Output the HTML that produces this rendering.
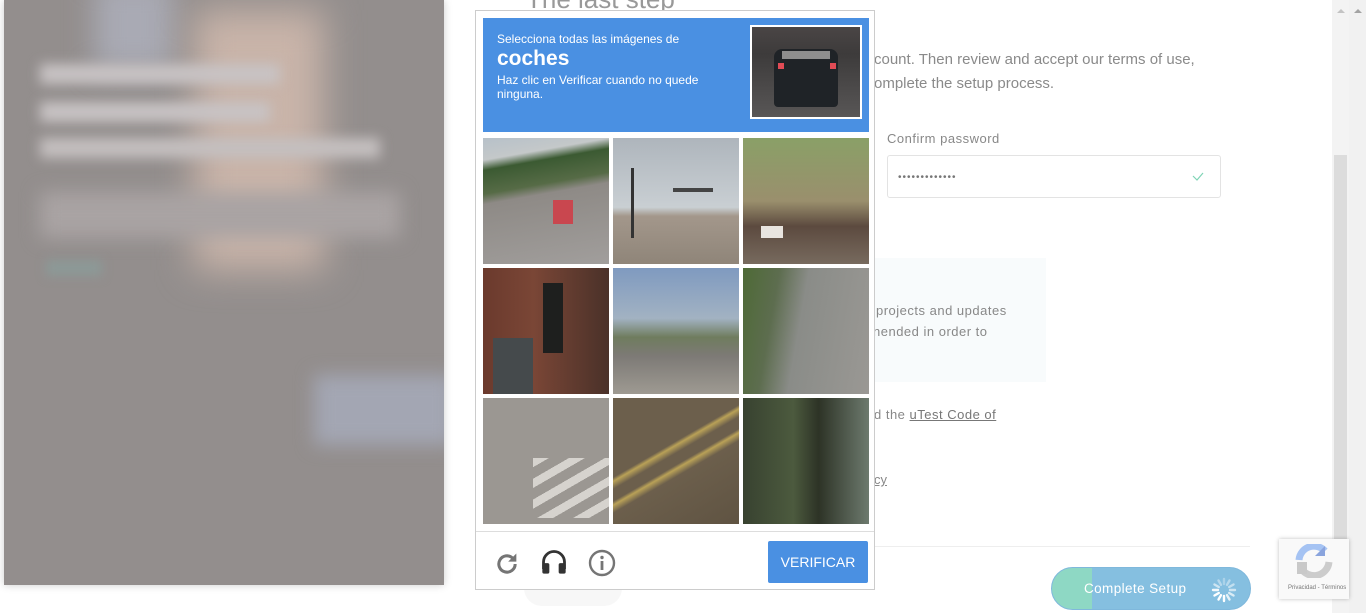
<!DOCTYPE html>
<html><head><meta charset="utf-8"><style>
*{margin:0;padding:0;box-sizing:border-box}
body{width:1366px;height:613px;overflow:hidden;background:#fff;position:relative;font-family:"Liberation Sans",sans-serif}
.abs{position:absolute}
.txt{color:#8a8a8a;font-size:15px}
.tile{position:absolute;width:126px;height:126px}
</style></head><body>
<div class="abs" style="left:4px;top:0;width:440px;height:585px;background:#938e8d;box-shadow:0 0 8px rgba(0,0,0,.2);overflow:hidden">
 <div class="abs" style="left:90px;top:-20px;width:80px;height:90px;background:#a9aab4;filter:blur(14px)"></div>
 <div class="abs" style="left:190px;top:10px;width:130px;height:260px;background:#c9b4a9;filter:blur(18px)"></div>
 <div class="abs" style="left:36px;top:64px;width:240px;height:20px;background:#c8c3c4;filter:blur(6px)"></div>
 <div class="abs" style="left:36px;top:102px;width:230px;height:20px;background:#c8c3c4;filter:blur(6px)"></div>
 <div class="abs" style="left:36px;top:138px;width:340px;height:20px;background:#c4bfbf;filter:blur(6px)"></div>
 <div class="abs" style="left:36px;top:192px;width:360px;height:46px;background:#a9a3a3;filter:blur(9px)"></div>
 <div class="abs" style="left:42px;top:260px;width:56px;height:16px;background:#8c9997;filter:blur(5px)"></div>
 <div class="abs" style="left:310px;top:375px;width:140px;height:70px;background:#a3a6b3;filter:blur(9px)"></div>
</div>
<div class="abs" style="left:526px;top:-16px;font-size:26px;color:#999">The last step</div>
<div class="abs txt" style="left:874px;top:48px;line-height:24px">count. Then review and accept our terms of use,<br>omplete the setup process.</div>
<div class="abs" style="left:887px;top:131px;font-size:13px;color:#888;letter-spacing:.5px">Confirm password</div>
<div class="abs" style="left:887px;top:155px;width:334px;height:43px;border:1px solid #e3e3e3;border-radius:3px">
 <div class="abs" style="left:10px;top:16px;font-size:10px;color:#777;letter-spacing:1px">•••••••••••••</div>
 <svg class="abs" style="left:304px;top:15px" width="12" height="10"><path d="M1 5l4 4 6-7" stroke="#7fd4b6" stroke-width="1.2" fill="none"/></svg>
</div>
<div class="abs" style="left:870px;top:258px;width:176px;height:124px;background:#f8fbfc"></div>
<div class="abs" style="left:876px;top:300px;font-size:13px;color:#888;line-height:21px;letter-spacing:.5px">projects and updates<br><span style="margin-left:-3px">nended in order to</span></div>
<div class="abs" style="left:874px;top:407px;font-size:13px;color:#888;letter-spacing:.5px">d the <u style="color:#777">uTest Code of</u></div>
<div class="abs" style="left:874px;top:472px;font-size:13px;color:#888"><u>cy</u></div>
<div class="abs" style="left:874px;top:546px;width:376px;height:1px;background:#eee"></div>
<div class="abs" style="left:524px;top:570px;width:98px;height:36px;border-radius:18px;background:#f7f7f7"></div>
<div class="abs" style="left:1051px;top:567px;width:200px;height:43px;border-radius:22px;background:#85bfe0;overflow:hidden;border:1px solid #7fb8dc">
 <div class="abs" style="left:0;top:0;width:40px;height:43px;background:#8ed8c4"></div>
 <div class="abs" style="left:32px;top:13px;font-size:13.5px;color:#fff;letter-spacing:.4px">Complete Setup</div>
 <svg class="abs" style="left:157px;top:7px" width="30" height="30" viewBox="-15 -15 30 30"><g stroke="#fff" stroke-width="2.4" stroke-linecap="round">
 <line x1="0" y1="-6" x2="0" y2="-11" opacity=".3" transform="rotate(0)"/><line x1="0" y1="-6" x2="0" y2="-11" opacity=".4" transform="rotate(30)"/><line x1="0" y1="-6" x2="0" y2="-11" opacity=".5" transform="rotate(60)"/><line x1="0" y1="-6" x2="0" y2="-11" opacity=".6" transform="rotate(90)"/><line x1="0" y1="-6" x2="0" y2="-11" opacity=".7" transform="rotate(120)"/><line x1="0" y1="-6" x2="0" y2="-11" opacity=".8" transform="rotate(150)"/><line x1="0" y1="-6" x2="0" y2="-11" transform="rotate(180)"/><line x1="0" y1="-6" x2="0" y2="-11" transform="rotate(210)"/><line x1="0" y1="-6" x2="0" y2="-11" transform="rotate(240)"/><line x1="0" y1="-6" x2="0" y2="-11" opacity=".9" transform="rotate(270)"/><line x1="0" y1="-6" x2="0" y2="-11" opacity=".6" transform="rotate(300)"/><line x1="0" y1="-6" x2="0" y2="-11" opacity=".4" transform="rotate(330)"/></g></svg>
</div>
<div class="abs" style="left:1332px;top:0;width:17px;height:613px;background:#f3f3f3"></div>
<div class="abs" style="left:1334px;top:155px;width:13px;height:400px;background:#dcdcdc"></div>
<div class="abs" style="left:1349px;top:0;width:17px;height:613px;background:#f1f1f1"></div>
<div class="abs" style="left:1354px;top:5px;width:0;height:0;border:4px solid transparent;border-bottom:4px solid #a3a3a3"></div>
<div class="abs" style="left:1337px;top:5px;width:0;height:0;border:4px solid transparent;border-bottom:4px solid #c3c3c3"></div>
<div class="abs" style="left:1279px;top:539px;width:70px;height:60px;background:#f9f9f9;box-shadow:0 0 4px rgba(0,0,0,.25)">
 <svg class="abs" style="left:16px;top:5px" width="38" height="34" viewBox="0 0 38 34"><path d="M4 16a15 15 0 0 1 26-9" stroke="#a5c3f3" stroke-width="7" fill="none"/><path d="M30 2v10h-10z" fill="#8aa4dd"/><path d="M34 18a15 15 0 0 1-28 6" stroke="#ccc" stroke-width="7" fill="none"/><rect x="2" y="18" width="10" height="12" fill="#c9c9c9"/></svg>
 <div class="abs" style="left:9px;top:46px;font-size:6px;color:#777">Privacidad - Términos</div>
</div>
<div class="abs" style="left:475px;top:10px;width:400px;height:580px;background:#fff;border:1px solid #ccc">
 <div class="abs" style="left:7px;top:7px;width:386px;height:114px;background:#4a90e2;color:#fff">
  <div class="abs" style="left:14px;top:14px;font-size:12px">Selecciona todas las imágenes de</div>
  <div class="abs" style="left:14px;top:29px;font-size:21px;font-weight:bold">coches</div>
  <div class="abs" style="left:14px;top:55px;font-size:12px;line-height:14px">Haz clic en Verificar cuando no quede<br>ninguna.</div>
  <div class="abs" style="left:267px;top:7px;width:112px;height:94px;border:2px solid #fff;background:linear-gradient(#4a4545,#3d3b3b 30%,#585656)">
   <div class="abs" style="left:22px;top:22px;width:64px;height:58px;background:#1f2327;border-radius:8px 8px 4px 4px"></div>
   <div class="abs" style="left:30px;top:24px;width:48px;height:8px;background:#8e8e8e"></div>
   <div class="abs" style="left:26px;top:36px;width:6px;height:6px;background:#e04b55"></div>
   <div class="abs" style="left:78px;top:36px;width:6px;height:6px;background:#e04b55"></div>
  </div>
 </div>
 <div class="tile" style="left:7px;top:127px;background:linear-gradient(170deg,#b7c1c9 0%,#c4c8c9 15%,#3b5a32 22%,#566b46 38%,#8e8a86 45%,#a19e9c 100%)"><div class="abs" style="left:70px;top:62px;width:20px;height:24px;background:#c9474f"></div></div>
 <div class="tile" style="left:137px;top:127px;background:linear-gradient(#aeb5bc 0%,#c9cfd3 55%,#a3978b 62%,#8f8579 100%)"><div class="abs" style="left:18px;top:30px;width:3px;height:70px;background:#333"></div><div class="abs" style="left:60px;top:50px;width:40px;height:4px;background:#444"></div></div>
 <div class="tile" style="left:267px;top:127px;background:linear-gradient(#8aa067,#9a8f6d 50%,#5c4a3f 70%,#776a5e)"><div class="abs" style="left:18px;top:88px;width:22px;height:12px;background:#e8e4df"></div></div>
 <div class="tile" style="left:7px;top:257px;background:linear-gradient(90deg,#6b3a2d,#7a4636 40%,#4a3129 100%)"><div class="abs" style="left:60px;top:15px;width:20px;height:70px;background:#1e1f1e"></div><div class="abs" style="left:10px;top:70px;width:40px;height:56px;background:#454a4c"></div></div>
 <div class="tile" style="left:137px;top:257px;background:linear-gradient(#7f9ac0 0%,#a2b2c2 40%,#6f7c5e 55%,#7d7a76 70%,#9e9a92 100%)"></div>
 <div class="tile" style="left:267px;top:257px;background:linear-gradient(100deg,#4e6a36 0%,#5d6d4f 25%,#8a8c88 45%,#9a9894 100%)"></div>
 <div class="tile" style="left:7px;top:387px;background:#9b9792"><div class="abs" style="left:50px;top:60px;width:76px;height:60px;background:repeating-linear-gradient(150deg,#d6d3ce 0 8px,#9b9792 8px 18px)"></div></div>
 <div class="tile" style="left:137px;top:387px;background:linear-gradient(150deg,#6c5f4c 0%,#6c5f4c 40%,#b9a157 42%,#6c5f4c 46%,#6c5f4c 52%,#b9a157 54%,#6c5f4c 58%,#5f5342 100%)"></div>
 <div class="tile" style="left:267px;top:387px;background:linear-gradient(90deg,#384230,#4c5a3e 40%,#2d3326 60%,#6d7a6e)"></div>
 <div class="abs" style="left:0;top:520px;width:398px;height:1px;background:#ddd"></div>
 <svg class="abs" style="left:17px;top:539px" width="28" height="28" viewBox="0 0 24 24"><path d="M19 12a7 7 0 1 1-2.2-5.1" stroke="#757575" stroke-width="2.6" fill="none"/><path d="M20 3v7h-7z" fill="#757575"/></svg>
 <svg class="abs" style="left:64px;top:537px" width="28" height="28" viewBox="0 0 24 24"><path d="M3 18v-6a9 9 0 0 1 18 0v6" stroke="#333" stroke-width="2.4" fill="none"/><rect x="2" y="13" width="6" height="9" rx="1.5" fill="#333"/><rect x="16" y="13" width="6" height="9" rx="1.5" fill="#333"/></svg>
 <svg class="abs" style="left:112px;top:538px" width="28" height="28" viewBox="0 0 28 28"><circle cx="14" cy="14" r="12" stroke="#757575" stroke-width="2.4" fill="none"/><rect x="12.6" y="12" width="2.8" height="9" fill="#757575"/><circle cx="14" cy="8.5" r="1.7" fill="#757575"/></svg>
 <div class="abs" style="left:292px;top:530px;width:100px;height:42px;background:#4a90e2;border-radius:2px;color:#fff;font-size:14px;text-align:center;line-height:42px">VERIFICAR</div>
</div>
</body></html>
